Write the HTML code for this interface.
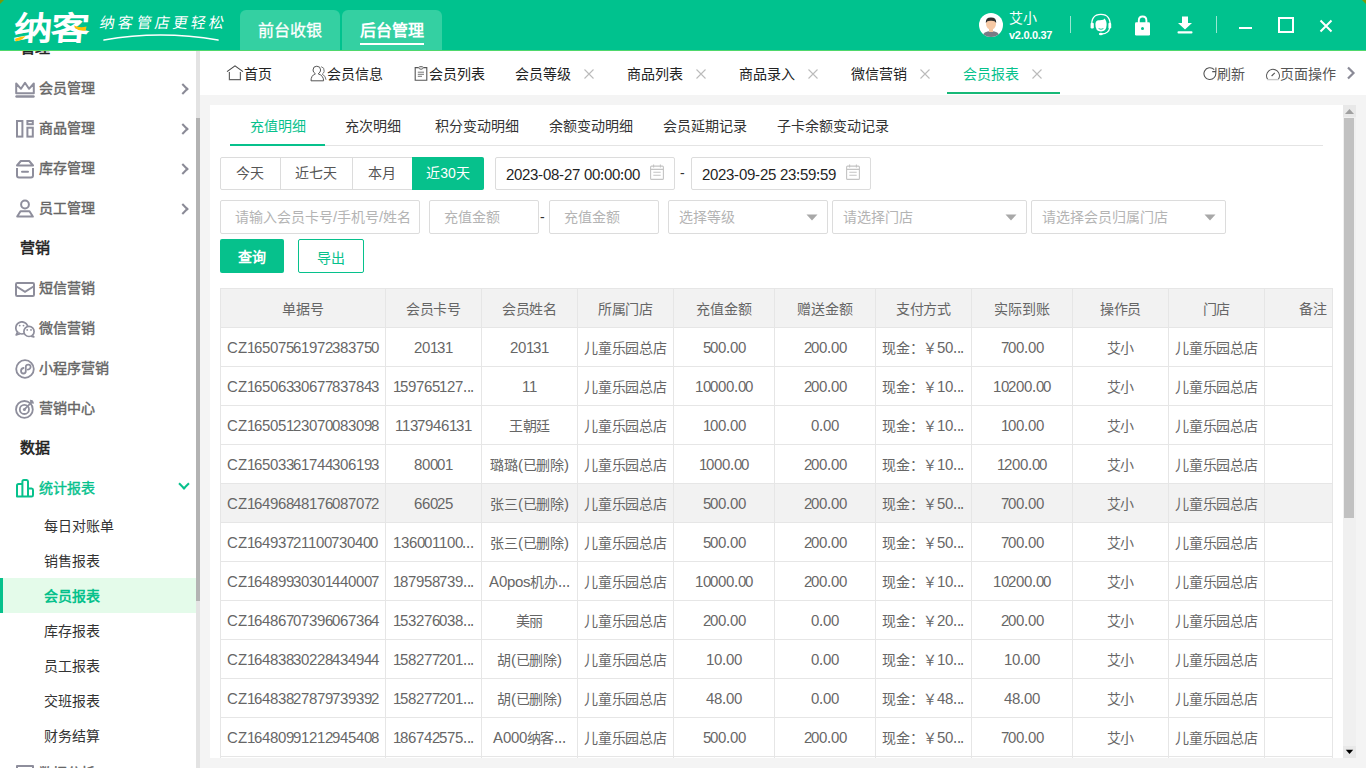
<!DOCTYPE html>
<html lang="zh-CN">
<head>
<meta charset="utf-8">
<style>
@font-face{font-family:"LSx";src:local("Liberation Sans");size-adjust:107%}
*{margin:0;padding:0;box-sizing:border-box}
html,body{width:1366px;height:768px;overflow:hidden;background:#f4f4f4;font-family:"Liberation Sans",sans-serif;font-size:14px;color:#333}
.abs{position:absolute}
#hdr{position:absolute;left:0;top:0;width:1366px;height:51px;background:#00c28e;border-bottom:1px solid #4fd86c}
.htab{position:absolute;top:10px;height:40px;width:100px;background:#34d0a2;border-radius:6px 6px 0 0;color:#fff;font-size:16px;text-align:center;line-height:42px}
#side{position:absolute;left:0;top:51px;width:200px;height:717px;background:#fff;overflow:hidden}
.mi{position:absolute;left:39px;font-size:14px;color:#666;line-height:20px;-webkit-text-stroke:0.4px currentColor}
.sec{position:absolute;left:20px;font-size:15px;color:#222;line-height:20px;-webkit-text-stroke:0.55px currentColor}
.sub{position:absolute;left:44px;font-size:14px;color:#333;line-height:20px}
.chev{position:absolute;left:179px;width:8px;height:8px;border-right:2.4px solid #8a8a96;border-top:2.4px solid #8a8a96;transform:rotate(45deg)}
#tabs{position:absolute;left:200px;top:51px;width:1166px;height:44px;background:#fff}
.tt{position:absolute;top:1px;line-height:44px;font-size:14px;color:#222;white-space:nowrap}
.tx{position:absolute;top:17px;width:10px;height:10px}
#card{position:absolute;left:210px;top:105px;width:1146px;height:653px;background:#fff;overflow:hidden}
.st{position:absolute;top:11px;line-height:20px;font-size:14px;white-space:nowrap}
.bt{position:absolute;top:52px;height:33px;line-height:33px;text-align:center;font-size:14px}
.inp{position:absolute;border:1px solid #dcdcdc;border-radius:2px;font-size:14px;white-space:nowrap;overflow:hidden;font-family:"LSx","Liberation Sans",sans-serif}
.ph{color:#b4b4b4}
table{border-collapse:collapse;table-layout:fixed;font-size:14px;color:#666;font-family:"LSx","Liberation Sans",sans-serif;letter-spacing:-0.2px}
td{border:1px solid #e6e6e6;height:39px;text-align:center;white-space:nowrap;overflow:hidden;padding:0}
tr.th td{background:#f2f2f2;color:#666}
tr.hl td{background:#f2f2f2}
</style>
</head>
<body>
<div id="hdr">
  <svg class="abs" style="left:0;top:0" width="6" height="6"><path d="M0 0H4L0 4Z" fill="#779a0a"/></svg>
  <svg class="abs" style="left:1360px;top:0" width="6" height="6"><path d="M2 0H6V4Z" fill="#779a0a"/></svg>
  <div class="abs" style="left:15px;top:12px;width:80px;height:34px;color:#fff;font-size:33px;font-weight:900;line-height:34px;letter-spacing:-1px;transform-origin:0 0;transform:scale(1.17,0.99) skewX(-4deg)">纳客</div>
  <svg class="abs" style="left:0;top:0" width="100" height="50"><path d="M15 38.8 Q20 36.8 25.5 36 Q23 40 15.5 41.5Z" fill="#ffc107"/><path d="M74 25.5 Q80 28.5 86.5 26.5 L85.8 30.5 Q79 31.5 75 28Z" fill="#ffc107"/></svg>
  <div class="abs" style="left:100px;top:12px;color:#fff;font-size:15px;line-height:22px;letter-spacing:3.2px;font-family:'Liberation Serif',serif;transform:skewX(-10deg)">纳客管店更轻松</div>
  <svg class="abs" style="left:100px;top:32px" width="124" height="12"><path d="M4 8 Q60 -2 118 8" stroke="#fff" stroke-width="1.6" fill="none" stroke-linecap="round"/></svg>
  <div class="htab" style="left:240px"><span style="-webkit-text-stroke:0.3px #fff">前台收银</span></div>
  <div class="htab" style="left:342px;width:100px;font-weight:bold">后台管理<div class="abs" style="left:18px;top:33px;width:64px;height:2px;background:#fff"></div></div>
  <!-- avatar -->
  <svg class="abs" style="left:979px;top:13px" width="24" height="24" viewBox="0 0 24 24">
    <circle cx="12" cy="12" r="12" fill="#fff"/>
    <clipPath id="avc"><circle cx="12" cy="12" r="12"/></clipPath>
    <g clip-path="url(#avc)">
      <path d="M3 24 Q4 18 12 18 Q20 18 21 24Z" fill="#7a7a85"/>
      <rect x="10" y="14" width="4" height="5" fill="#f4c4a0"/>
      <ellipse cx="12" cy="11" rx="5" ry="5.5" fill="#f6c8a4"/>
      <path d="M6.8 10 Q6.5 4.5 12 4.6 Q17.5 4.5 17.2 10 Q16 7.5 12 7.8 Q8 7.5 6.8 10Z" fill="#2e2e2e"/>
    </g>
  </svg>
  <div class="abs" style="left:1009px;top:9px;color:#fff;font-size:14px;line-height:18px">艾小</div>
  <div class="abs" style="left:1009px;top:28px;color:#fff;font-size:11px;line-height:14px;font-weight:bold;letter-spacing:-0.3px">v2.0.0.37</div>
  <div class="abs" style="left:1070px;top:16px;width:1px;height:17px;background:rgba(255,255,255,.6)"></div>
  <!-- headset -->
  <svg class="abs" style="left:1085px;top:8px" width="30" height="30" viewBox="0 0 30 30">
    <path d="M6.8 19 Q5.6 6.4 15.9 6.4 Q26 6.4 25.2 19" stroke="#fff" stroke-width="1.3" fill="none"/>
    <rect x="5.6" y="14.8" width="3.2" height="5.6" rx="1.2" fill="#fff"/>
    <rect x="23.4" y="14.8" width="2.8" height="5.6" rx="1.2" fill="#fff"/>
    <path d="M10.4 16 Q10.6 12 14 12.2 Q16.5 12.3 18.4 11.8 L19.4 10.4 Q21.8 12.5 21.6 17 Q21.4 23.4 16 23.6 Q10.2 23.5 10.4 16Z" fill="#fff"/>
    <path d="M13.6 20.6 Q16 22 18.4 20.6" stroke="#00c28e" stroke-width="0.9" fill="none"/>
    <path d="M24.6 20 Q24 25.4 16.6 26" stroke="#fff" stroke-width="1.3" fill="none"/>
    <ellipse cx="15.8" cy="26" rx="1.9" ry="1.3" fill="#fff"/>
  </svg>
  <!-- lock -->
  <svg class="abs" style="left:1134px;top:15px" width="17" height="21" viewBox="0 0 17 21">
    <path d="M4.8 8 V5.4 Q4.8 1.5 8.6 1.5 Q12.4 1.5 12.4 5.4 V8" stroke="#fff" stroke-width="1.9" fill="none"/>
    <rect x="1" y="7.3" width="15" height="13.2" rx="1.3" fill="#fff"/>
    <circle cx="8.5" cy="13.6" r="1.5" fill="#00c28e"/>
  </svg>
  <!-- download -->
  <svg class="abs" style="left:1177px;top:16px" width="16" height="18" viewBox="0 0 16 18">
    <path d="M5 0.5 H11 V7 H15 L8 13.5 L1 7 H5Z" fill="#fff"/>
    <rect x="0.5" y="15.2" width="15" height="2.4" rx="1" fill="#fff"/>
  </svg>
  <div class="abs" style="left:1216px;top:16px;width:1px;height:17px;background:rgba(255,255,255,.6)"></div>
  <div class="abs" style="left:1239px;top:27px;width:13px;height:2px;background:#fff"></div>
  <div class="abs" style="left:1278px;top:17px;width:16px;height:16px;border:2px solid #fff"></div>
  <svg class="abs" style="left:1319px;top:19px" width="14" height="14" viewBox="0 0 14 14"><path d="M1.5 1.5 L12.5 12.5 M12.5 1.5 L1.5 12.5" stroke="#fff" stroke-width="2"/></svg>
</div>
<div id="side">
  <div class="sec" style="top:-13px">管理</div>
  <svg class="abs" style="left:15px;top:30px" width="20" height="17" viewBox="0 0 20 17"><path d="M1.2 2.5 L6 7.8 L10 1.8 L14 7.8 L18.8 2.5 V12.2 H1.2Z" stroke="#8e8e9c" stroke-width="2" fill="none" stroke-linejoin="round"/><rect x="0.3" y="14.3" width="19.4" height="2.5" rx="1.2" fill="#8e8e9c"/></svg>
  <div class="mi" style="top:27px">会员管理</div><div class="chev" style="top:34px"></div>
  <svg class="abs" style="left:16px;top:69px" width="18" height="18" viewBox="0 0 18 18"><rect x="1" y="1" width="5.4" height="15.6" stroke="#8e8e9c" stroke-width="2" fill="none"/><rect x="11.4" y="1" width="5.4" height="3.2" stroke="#8e8e9c" stroke-width="2" fill="none"/><rect x="11.4" y="7.7" width="5.4" height="8.9" stroke="#8e8e9c" stroke-width="2" fill="none"/></svg>
  <div class="mi" style="top:67px">商品管理</div><div class="chev" style="top:74px"></div>
  <svg class="abs" style="left:16px;top:109px" width="18" height="19" viewBox="0 0 18 19"><path d="M1 5.5 L4.8 1 H13.2 L17 5.5Z" stroke="#8e8e9c" stroke-width="2" fill="none" stroke-linejoin="round"/><path d="M1 8 V15.5 Q1 17.5 3 17.5 H15 Q17 17.5 17 15.5 V8" stroke="#8e8e9c" stroke-width="2" fill="none"/><path d="M6 11.7 H12" stroke="#8e8e9c" stroke-width="2" stroke-linecap="round"/></svg>
  <div class="mi" style="top:107px">库存管理</div><div class="chev" style="top:114px"></div>
  <svg class="abs" style="left:16px;top:148px" width="18" height="19" viewBox="0 0 18 19"><circle cx="9" cy="5.5" r="3.9" stroke="#8e8e9c" stroke-width="2" fill="none"/><path d="M4.5 12.2 H13.5 L16.8 17.6 H1.2Z" stroke="#8e8e9c" stroke-width="2" fill="none" stroke-linejoin="round"/></svg>
  <div class="mi" style="top:147px">员工管理</div><div class="chev" style="top:154px"></div>
  <div class="sec" style="top:187px">营销</div>
  <svg class="abs" style="left:15px;top:231px" width="20" height="15" viewBox="0 0 20 15"><rect x="1" y="1" width="18" height="13" rx="1.2" stroke="#8e8e9c" stroke-width="2" fill="none"/><path d="M1.5 4.5 L10 9.8 L18.5 4.5" stroke="#8e8e9c" stroke-width="2" fill="none"/></svg>
  <div class="mi" style="top:227px">短信营销</div>
  <svg class="abs" style="left:15px;top:270px" width="20" height="18" viewBox="0 0 20 18"><circle cx="6.9" cy="6.9" r="6.1" stroke="#8e8e9c" stroke-width="1.7" fill="none"/><path d="M2.6 11.2 L1.2 14 L4.8 12.6" stroke="#8e8e9c" stroke-width="1.7" fill="#fff" stroke-linejoin="round"/><circle cx="14" cy="10.4" r="5.1" stroke="#8e8e9c" stroke-width="1.7" fill="#fff"/><path d="M17.2 14.3 L18.8 15.8 L16 15.2" stroke="#8e8e9c" stroke-width="1.7" fill="#fff" stroke-linejoin="round"/><circle cx="4.7" cy="4.6" r="0.9" fill="#8e8e9c"/><circle cx="8.5" cy="4.6" r="0.9" fill="#8e8e9c"/><circle cx="12.2" cy="8.9" r="0.9" fill="#8e8e9c"/><circle cx="16" cy="8.9" r="0.9" fill="#8e8e9c"/></svg>
  <div class="mi" style="top:267px">微信营销</div>
  <svg class="abs" style="left:15px;top:308px" width="20" height="20" viewBox="0 0 20 20"><circle cx="10" cy="10" r="8.8" stroke="#8e8e9c" stroke-width="1.8" fill="none"/><path d="M8.5 9 Q6 9.5 6 12 Q6.2 14.6 8.5 14.5 Q10.8 14.4 10.8 12 V8.2 Q10.8 5.5 13.5 5.6 Q15.8 5.8 15.6 8 Q15.4 10.2 12.8 10.6" stroke="#8e8e9c" stroke-width="1.8" fill="none" stroke-linecap="round"/></svg>
  <div class="mi" style="top:307px">小程序营销</div>
  <svg class="abs" style="left:14px;top:348px" width="20" height="20" viewBox="0 0 20 20"><circle cx="10.4" cy="10.4" r="8.4" stroke="#8e8e9c" stroke-width="1.8" fill="none"/><circle cx="10.4" cy="10.4" r="4.6" stroke="#8e8e9c" stroke-width="1.8" fill="none"/><circle cx="10.4" cy="10.4" r="1.5" fill="#8e8e9c"/><path d="M10.4 10.4 L17.5 3.3" stroke="#8e8e9c" stroke-width="1.8"/><path d="M16.3 1.2 L17 3.6 L19.4 4.3 L18.6 1.8Z" fill="#8e8e9c" stroke="#8e8e9c" stroke-width="1"/></svg>
  <div class="mi" style="top:347px">营销中心</div>
  <div class="sec" style="top:387px">数据</div>
  <svg class="abs" style="left:16px;top:428px" width="18" height="19" viewBox="0 0 18 19"><path d="M1 17.5 V6.5 Q1 5 2.5 5 H6.4 V17.5Z M6.4 17.5 V2.5 Q6.4 1 7.9 1 H10.6 Q12 1 12 2.5 V17.5Z M12 17.5 V9.4 H15.6 Q17 9.4 17 10.9 V16 Q17 17.5 15.6 17.5Z" stroke="#06c18c" stroke-width="2" fill="none" stroke-linejoin="round"/></svg>
  <div class="mi" style="top:427px;color:#06c18c">统计报表</div>
  <div class="abs" style="left:180px;top:429px;width:8px;height:8px;border-right:2.4px solid #06c18c;border-bottom:2.4px solid #06c18c;transform:rotate(45deg)"></div>
  <div class="sub" style="top:465px">每日对账单</div>
  <div class="sub" style="top:500px">销售报表</div>
  <div class="abs" style="left:0;top:527px;width:196px;height:35px;background:#e4fbea;border-left:3px solid #06c18c"></div>
  <div class="sub" style="top:535px;color:#06c18c;font-weight:bold">会员报表</div>
  <div class="sub" style="top:570px">库存报表</div>
  <div class="sub" style="top:605px">员工报表</div>
  <div class="sub" style="top:640px">交班报表</div>
  <div class="sub" style="top:675px">财务结算</div>
  <div class="abs" style="left:16px;top:714px;width:18px;height:16px;border:2px solid #8e8e9c;border-radius:1px;background:#fff"></div>
  <div class="mi" style="top:712px">数据分析</div>
  <div class="abs" style="left:196px;top:0;width:4px;height:717px;background:#e3e3e3"></div>
  <div class="abs" style="left:196px;top:67px;width:4px;height:483px;background:#b3b3b3"></div>
</div>

<div id="tabs">
  <svg class="abs" style="left:26px;top:14px" width="18" height="16" viewBox="0 0 18 16"><path d="M1 6.6 L9 0.9 L17 6.6" stroke="#444" stroke-width="1.1" fill="none"/><path d="M3.4 7 V14.6 H14.4 V7" stroke="#666" stroke-width="1.2" fill="none"/></svg>
  <div class="tt" style="left:44px">首页</div>
  <svg class="abs" style="left:110px;top:14px" width="18" height="17" viewBox="0 0 18 17"><path d="M5.4 8.8 Q3 7.3 3 5 Q3 1.2 6.8 1.2 Q10.6 1.2 10.6 5 Q10.6 7.3 8.2 8.8 Q13.6 10.5 13.6 15.8 H1 Q1 10.5 5.4 8.8Z" stroke="#555" stroke-width="1" fill="none"/><path d="M11.2 1.7 Q14.6 2.4 14.2 6.3 Q13.8 8.3 12.2 9.2 Q15.8 10.8 16 14.8" stroke="#777" stroke-width="1" fill="none"/></svg>
  <div class="tt" style="left:127px">会员信息</div>
  <svg class="abs" style="left:214px;top:15px" width="14" height="15" viewBox="0 0 14 15"><path d="M4.5 1.6 H1.2 V14.2 H12.8 V1.6 H9.5" stroke="#555" stroke-width="1.1" fill="none"/><path d="M4.5 1.4 Q5 3.3 7 3.3 Q9 3.3 9.5 1.4 Q8.5 0.5 7 0.6 Q5.5 0.5 4.5 1.4Z" stroke="#666" stroke-width="1" fill="#eee"/><path d="M3.8 6.2 H10 M3.8 8.3 H10 M3.8 10.3 H8" stroke="#666" stroke-width="0.9"/></svg>
  <div class="tt" style="left:229px">会员列表</div>
  <div class="tt" style="left:315px">会员等级</div>
  <svg class="tx" style="left:384px;top:18px" viewBox="0 0 10 10"><path d="M0.5 0.5 L9.5 9.5 M9.5 0.5 L0.5 9.5" stroke="#bbb" stroke-width="1.1"/></svg>
  <div class="tt" style="left:427px">商品列表</div>
  <svg class="tx" style="left:496px;top:18px" viewBox="0 0 10 10"><path d="M0.5 0.5 L9.5 9.5 M9.5 0.5 L0.5 9.5" stroke="#bbb" stroke-width="1.1"/></svg>
  <div class="tt" style="left:539px">商品录入</div>
  <svg class="tx" style="left:608px;top:18px" viewBox="0 0 10 10"><path d="M0.5 0.5 L9.5 9.5 M9.5 0.5 L0.5 9.5" stroke="#bbb" stroke-width="1.1"/></svg>
  <div class="tt" style="left:651px">微信营销</div>
  <svg class="tx" style="left:720px;top:18px" viewBox="0 0 10 10"><path d="M0.5 0.5 L9.5 9.5 M9.5 0.5 L0.5 9.5" stroke="#bbb" stroke-width="1.1"/></svg>
  <div class="tt" style="left:763px;color:#06c18c">会员报表</div>
  <svg class="tx" style="left:832px;top:18px" viewBox="0 0 10 10"><path d="M0.5 0.5 L9.5 9.5 M9.5 0.5 L0.5 9.5" stroke="#bbb" stroke-width="1.1"/></svg>
  <div class="abs" style="left:747px;top:41px;width:113px;height:2px;background:#16b877"></div>
  <svg class="abs" style="left:1003px;top:15px" width="15" height="15" viewBox="0 0 15 15"><path d="M12.6 6.2 A5.9 5.9 0 1 1 11.2 3.6" stroke="#555" stroke-width="1.1" fill="none"/><path d="M12.9 1.6 V5.6 H9.2" stroke="#555" stroke-width="1.1" fill="none"/></svg>
  <div class="tt" style="left:1017px;color:#555">刷新</div>
  <svg class="abs" style="left:1065px;top:16px" width="16" height="14" viewBox="0 0 16 14"><path d="M2.6 12.2 A6.4 6.4 0 1 1 13.4 12.2" stroke="#555" stroke-width="1.1" fill="none"/><path d="M2.4 12.6 H13.6" stroke="#c8c8c8" stroke-width="1.4"/><path d="M6.6 9 L9.8 5.8" stroke="#555" stroke-width="1.1"/></svg>
  <div class="tt" style="left:1080px;color:#555">页面操作</div>
  <svg class="abs" style="left:1146px;top:15px" width="10" height="14" viewBox="0 0 10 14"><path d="M2 1.5 L7.5 7 L2 12.5" stroke="#8a8a96" stroke-width="2.2" fill="none"/></svg>
</div>

<div id="card">
<div class="st" style="left:40px;color:#06c18c">充值明细</div>
<div class="st" style="left:135px;color:#333">充次明细</div>
<div class="st" style="left:225px;color:#333">积分变动明细</div>
<div class="st" style="left:339px;color:#333">余额变动明细</div>
<div class="st" style="left:453px;color:#333">会员延期记录</div>
<div class="st" style="left:567px;color:#333">子卡余额变动记录</div>
<div class="abs" style="left:20px;top:40px;width:1093px;height:1px;background:#e4e4e4"></div>
<div class="abs" style="left:20px;top:39px;width:95px;height:2px;background:#06c18c"></div>
<div class="abs" style="left:10px;top:52px;width:264px;height:33px;border:1px solid #dcdcdc;border-radius:2px"></div>
<div class="abs" style="left:70px;top:52px;width:1px;height:33px;background:#dcdcdc"></div>
<div class="abs" style="left:142px;top:52px;width:1px;height:33px;background:#dcdcdc"></div>
<div class="abs" style="left:202px;top:52px;width:1px;height:33px;background:#dcdcdc"></div>
<div class="abs" style="left:202px;top:52px;width:72px;height:33px;background:#06c18c;border-radius:0 2px 2px 0"></div>
<div class="bt" style="left:10px;width:60px;color:#555">今天</div>
<div class="bt" style="left:70px;width:72px;color:#555">近七天</div>
<div class="bt" style="left:142px;width:60px;color:#555">本月</div>
<div class="bt" style="left:202px;width:72px;color:#fff">近30天</div>
<div class="inp" style="left:285px;top:52px;width:180px;height:33px;color:#222;line-height:33px;padding-left:10px">2023-08-27 00:00:00</div>
<svg class="abs" style="left:440px;top:59px" width="14" height="16" viewBox="0 0 14 16"><rect x="0.6" y="2.1" width="12.8" height="13.3" rx="1" stroke="#c4c4c4" stroke-width="1.1" fill="none"/><path d="M0.6 5.4 H13.4 M3.6 0.5 V3.4 M10.4 0.5 V3.4 M3.3 8.3 H10.7 M3.3 11.3 H10.7" stroke="#c4c4c4" stroke-width="1.1"/></svg>
<div class="inp" style="left:481px;top:52px;width:180px;height:33px;color:#222;line-height:33px;padding-left:10px">2023-09-25 23:59:59</div>
<svg class="abs" style="left:636px;top:59px" width="14" height="16" viewBox="0 0 14 16"><rect x="0.6" y="2.1" width="12.8" height="13.3" rx="1" stroke="#c4c4c4" stroke-width="1.1" fill="none"/><path d="M0.6 5.4 H13.4 M3.6 0.5 V3.4 M10.4 0.5 V3.4 M3.3 8.3 H10.7 M3.3 11.3 H10.7" stroke="#c4c4c4" stroke-width="1.1"/></svg>
<div class="abs" style="left:470px;top:58px;color:#333;line-height:20px">-</div>
<div class="inp ph" style="left:10px;top:95px;width:200px;height:34px;line-height:32px;padding-left:14px">请输入会员卡号/手机号/姓名</div>
<div class="inp ph" style="left:219px;top:95px;width:110px;height:34px;line-height:32px;padding-left:14px">充值金额</div>
<div class="inp ph" style="left:339px;top:95px;width:110px;height:34px;line-height:32px;padding-left:14px">充值金额</div>
<div class="abs" style="left:330px;top:102px;color:#333;line-height:20px">-</div>
<div class="inp ph" style="left:458px;top:95px;width:160px;height:34px;line-height:32px;padding-left:10px">选择等级</div>
<svg class="abs" style="left:596px;top:109px" width="12" height="7" viewBox="0 0 12 7"><path d="M0.5 0.5 H11.5 L6 6.5Z" fill="#a8a8a8"/></svg>
<div class="inp ph" style="left:622px;top:95px;width:195px;height:34px;line-height:32px;padding-left:10px">请选择门店</div>
<svg class="abs" style="left:795px;top:109px" width="12" height="7" viewBox="0 0 12 7"><path d="M0.5 0.5 H11.5 L6 6.5Z" fill="#a8a8a8"/></svg>
<div class="inp ph" style="left:821px;top:95px;width:195px;height:34px;line-height:32px;padding-left:10px">请选择会员归属门店</div>
<svg class="abs" style="left:994px;top:109px" width="12" height="7" viewBox="0 0 12 7"><path d="M0.5 0.5 H11.5 L6 6.5Z" fill="#a8a8a8"/></svg>
<div class="abs" style="left:10px;top:134px;width:64px;height:34px;background:#06c18c;border-radius:2px;color:#fff;text-align:center;line-height:37px;font-weight:bold">查询</div>
<div class="abs" style="left:88px;top:134px;width:66px;height:34px;border:1px solid #06c18c;border-radius:2px;color:#06c18c;text-align:center;line-height:36px">导出</div>
<div class="abs" style="left:10px;top:183px;width:1113px;height:470px;overflow:hidden">
<table style="width:1112px">
<colgroup><col style="width:165px"><col style="width:96px"><col style="width:96px"><col style="width:96px"><col style="width:101px"><col style="width:101px"><col style="width:96px"><col style="width:101px"><col style="width:96px"><col style="width:96px"><col style="width:68px"></colgroup>
<tr class="th"><td>单据号</td><td>会员卡号</td><td>会员姓名</td><td>所属门店</td><td>充值金额</td><td>赠送金额</td><td>支付方式</td><td>实际到账</td><td>操作员</td><td>门店</td><td style="text-align:right;padding-right:5px">备注</td></tr>
<tr><td style="text-align:left;padding-left:6px">CZ16507561972383750</td><td>20131</td><td>20131</td><td>儿童乐园总店</td><td>500.00</td><td>200.00</td><td style="text-align:left;padding-left:6px">现金：￥50...</td><td>700.00</td><td>艾小</td><td>儿童乐园总店</td><td style="text-align:right;padding-right:5px"></td></tr>
<tr><td style="text-align:left;padding-left:6px">CZ16506330677837843</td><td>159765127...</td><td>11</td><td>儿童乐园总店</td><td>10000.00</td><td>200.00</td><td style="text-align:left;padding-left:6px">现金：￥10...</td><td>10200.00</td><td>艾小</td><td>儿童乐园总店</td><td style="text-align:right;padding-right:5px"></td></tr>
<tr><td style="text-align:left;padding-left:6px">CZ16505123070083098</td><td>1137946131</td><td>王朝廷</td><td>儿童乐园总店</td><td>100.00</td><td>0.00</td><td style="text-align:left;padding-left:6px">现金：￥10...</td><td>100.00</td><td>艾小</td><td>儿童乐园总店</td><td style="text-align:right;padding-right:5px"></td></tr>
<tr><td style="text-align:left;padding-left:6px">CZ16503361744306193</td><td>80001</td><td>璐璐(已删除)</td><td>儿童乐园总店</td><td>1000.00</td><td>200.00</td><td style="text-align:left;padding-left:6px">现金：￥10...</td><td>1200.00</td><td>艾小</td><td>儿童乐园总店</td><td style="text-align:right;padding-right:5px"></td></tr>
<tr class="hl"><td style="text-align:left;padding-left:6px">CZ16496848176087072</td><td>66025</td><td>张三(已删除)</td><td>儿童乐园总店</td><td>500.00</td><td>200.00</td><td style="text-align:left;padding-left:6px">现金：￥50...</td><td>700.00</td><td>艾小</td><td>儿童乐园总店</td><td style="text-align:right;padding-right:5px"></td></tr>
<tr><td style="text-align:left;padding-left:6px">CZ16493721100730400</td><td>136001100...</td><td>张三(已删除)</td><td>儿童乐园总店</td><td>500.00</td><td>200.00</td><td style="text-align:left;padding-left:6px">现金：￥50...</td><td>700.00</td><td>艾小</td><td>儿童乐园总店</td><td style="text-align:right;padding-right:5px"></td></tr>
<tr><td style="text-align:left;padding-left:6px">CZ16489930301440007</td><td>187958739...</td><td>A0pos机办...</td><td>儿童乐园总店</td><td>10000.00</td><td>200.00</td><td style="text-align:left;padding-left:6px">现金：￥10...</td><td>10200.00</td><td>艾小</td><td>儿童乐园总店</td><td style="text-align:right;padding-right:5px"></td></tr>
<tr><td style="text-align:left;padding-left:6px">CZ16486707396067364</td><td>153276038...</td><td>美丽</td><td>儿童乐园总店</td><td>200.00</td><td>0.00</td><td style="text-align:left;padding-left:6px">现金：￥20...</td><td>200.00</td><td>艾小</td><td>儿童乐园总店</td><td style="text-align:right;padding-right:5px"></td></tr>
<tr><td style="text-align:left;padding-left:6px">CZ16483830228434944</td><td>158277201...</td><td>胡(已删除)</td><td>儿童乐园总店</td><td>10.00</td><td>0.00</td><td style="text-align:left;padding-left:6px">现金：￥10...</td><td>10.00</td><td>艾小</td><td>儿童乐园总店</td><td style="text-align:right;padding-right:5px"></td></tr>
<tr><td style="text-align:left;padding-left:6px">CZ16483827879739392</td><td>158277201...</td><td>胡(已删除)</td><td>儿童乐园总店</td><td>48.00</td><td>0.00</td><td style="text-align:left;padding-left:6px">现金：￥48...</td><td>48.00</td><td>艾小</td><td>儿童乐园总店</td><td style="text-align:right;padding-right:5px"></td></tr>
<tr><td style="text-align:left;padding-left:6px">CZ16480991212945408</td><td>186742575...</td><td>A000纳客...</td><td>儿童乐园总店</td><td>500.00</td><td>200.00</td><td style="text-align:left;padding-left:6px">现金：￥50...</td><td>700.00</td><td>艾小</td><td>儿童乐园总店</td><td style="text-align:right;padding-right:5px"></td></tr>
<tr><td style="text-align:left;padding-left:6px">CZ16480000000000000</td><td></td><td></td><td></td><td></td><td></td><td style="text-align:left;padding-left:6px"></td><td></td><td></td><td></td><td style="text-align:right;padding-right:5px"></td></tr>
</table></div>
<div class="abs" style="left:1133px;top:0;width:13px;height:653px;background:#f0f0f0"></div>
<div class="abs" style="left:1133px;top:0;width:13px;height:12px;background:#e8e8e8"></div>
<svg class="abs" style="left:1134px;top:3px" width="11" height="7" viewBox="0 0 11 7"><path d="M5.5 1 L10 6 H1Z" fill="#a0a0a0"/></svg>
<div class="abs" style="left:1134px;top:13px;width:10px;height:400px;background:#c1c1c1"></div>
<div class="abs" style="left:1133px;top:641px;width:13px;height:12px;background:#e8e8e8"></div>
<svg class="abs" style="left:1135px;top:644px" width="9" height="6" viewBox="0 0 9 6"><path d="M0.8 0.8 H8.2 L4.5 5Z" fill="#000"/></svg>
</div>
</body>
</html>
